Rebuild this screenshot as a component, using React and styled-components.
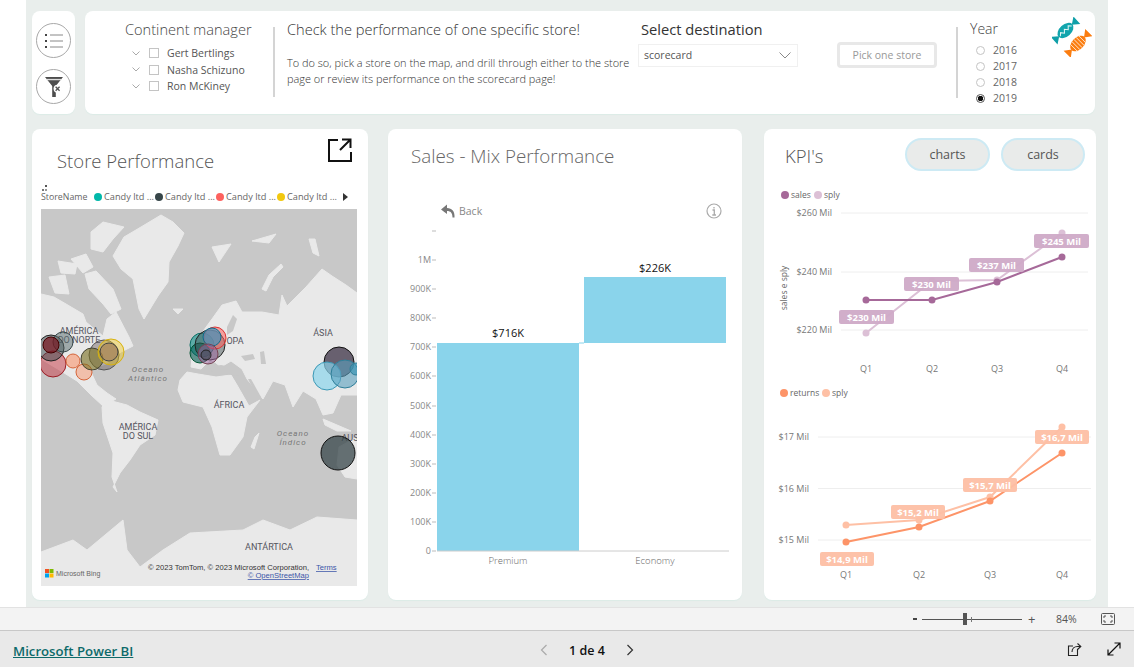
import React from 'react'
import styled, { createGlobalStyle } from 'styled-components'

const Global = createGlobalStyle`
  html, body {
    margin: 0;
    height: 100%;
    overflow: hidden;
    background: #fff;
    font-family: "Open Sans", "Noto Sans", sans-serif;
  }
`

const Page = styled.div`
  width: 1134px;
  height: 667px;
  display: flex;
  flex-direction: column;
`
const Canvas = styled.div`
  width: 1082px;
  height: 607px;
  margin-left: 26px;
  padding: 11px 0 0 6px;
  box-sizing: border-box;
  background: #e9eeec;
  display: flex;
  flex-direction: column;
  gap: 15px;
`
const TopRow = styled.div`
  display: flex;
  gap: 10px;
  height: 103px;
`
const BottomRow = styled.div`
  display: flex;
  height: 471px;
`
const Card = styled.div`
  background: #fff;
  border-radius: 8px;
  box-shadow: 0 1px 1px #dcebe7;
  box-sizing: border-box;
  overflow: hidden;
  width: ${p => p.$w}px;
  margin-right: ${p => p.$mr || 0}px;
`
const SideCard = styled(Card)`
  width: 43px;
  display: flex;
  flex-direction: column;
  align-items: center;
  padding-top: 12px;
  gap: 11px;
`
const RoundBtn = styled.div`
  width: 33px;
  height: 33px;
  border: 1px solid #a8a8a8;
  border-radius: 50%;
  display: flex;
  align-items: center;
  justify-content: center;
`
const MainCard = styled(Card)`
  width: 1010px;
  display: flex;
  position: relative;
`
const Slicer = styled.div`
  width: 148px;
  height: 70px;
  margin: 16px 0 0 40px;
  border-right: 2px solid #d4d4d4;
`
const SlicerTitle = styled.div`
  font-size: 14.6px;
  font-weight: 300;
  color: #444;
  line-height: 20px;
  margin-top: -8px;
`
const ManagerRows = styled.div`
  margin-top: 6px;
  padding-left: 7px;
`
const ManagerRow = styled.div`
  display: flex;
  align-items: center;
  height: 16.5px;
  font-size: 10.5px;
  color: #555;
`
const Check = styled.span`
  width: 10px;
  height: 10px;
  border: 1px solid #c4c4c4;
  margin: 0 8px 0 9px;
  box-sizing: border-box;
`
const Message = styled.div`
  width: 351px;
  margin-left: 12px;
`
const MessageTitle = styled.div`
  font-size: 14.6px;
  font-weight: 300;
  color: #333;
  line-height: 20px;
  margin-top: 8px;
  white-space: nowrap;
`
const MessageBody = styled.div`
  font-size: 10.95px;
  font-weight: 300;
  color: #333;
  line-height: 16px;
  margin-top: 16px;
  white-space: nowrap;
`
const Destination = styled.div`
  width: 318px;
`
const DestTitle = styled.div`
  font-size: 14.7px;
  color: #333;
  line-height: 20px;
  margin: 8px 0 0 3px;
`
const DestRow = styled.div`
  display: flex;
  align-items: center;
  margin-top: 3px;
`
const Select = styled.div`
  width: 160px;
  height: 23px;
  border: 1px solid #f0f0f0;
  box-sizing: border-box;
  display: flex;
  align-items: center;
  justify-content: space-between;
  padding: 0 6px 0 5px;
  font-size: 10.5px;
  color: #555;
`
const PickBtn = styled.div`
  width: 100px;
  height: 26px;
  margin-left: 39px;
  border: 3px solid #e8e8e8;
  border-radius: 4px;
  box-sizing: border-box;
  font-size: 10.5px;
  color: #999;
  display: flex;
  align-items: center;
  justify-content: center;
`
const YearSlicer = styled.div`
  border-left: 2px solid #d4d4d4;
  height: 71px;
  margin-top: 16px;
  padding-left: 12px;
`
const YearTitle = styled.div`
  font-size: 14px;
  font-weight: 300;
  color: #444;
  line-height: 20px;
  margin-top: -8px;
`
const YearRows = styled.div`
  margin-top: 3px;
  padding-left: 6px;
`
const YearRow = styled.div`
  display: flex;
  align-items: center;
  height: 16px;
  font-size: 10.5px;
  color: #666;
  gap: 8px;
`
const Radio = styled.span`
  width: 9px;
  height: 9px;
  border-radius: 50%;
  border: 1px solid ${p => (p.$on ? '#555' : '#c4c4c4')};
  box-sizing: border-box;
  background: ${p => (p.$on ? 'radial-gradient(circle, #111 0 2.5px, #fff 3px)' : '#fff')};
`
const CandySlot = styled.div`
  position: absolute;
  left: 967px;
  top: 6px;
`

const MapHeader = styled.div`
  display: flex;
  justify-content: space-between;
  height: 47px;
  padding: 9px 16px 0 25px;
  box-sizing: border-box;
`
const StoreTitle = styled.div`
  align-self: flex-end;
  font-size: 18.5px;
  font-weight: 300;
  color: #555;
  line-height: 30px;
`
const Legend = styled.div`
  display: flex;
  align-items: center;
  height: 33px;
  padding: 8px 0 0 9px;
  box-sizing: border-box;
  position: relative;
  font-size: 9.2px;
  color: #666;
  white-space: nowrap;
`
const LegendName = styled.span`
  width: 53px;
  font-size: 8.8px;
`
const LegendItem = styled.span`
  width: 61px;
  display: flex;
  align-items: center;
  gap: 2px;
`
const Dot = styled.i`
  width: 8px;
  height: 8px;
  border-radius: 50%;
  background: ${p => p.$c};
`
const MoreDots = styled.span`
  position: absolute;
  left: 13px;
  top: 9px;
  width: 2px;
  height: 2px;
  background: #555;
  box-shadow: -3px 4px 0 #777, 0 4px 0 #999;
`
const Arrow = styled.span`
  margin-left: 5px;
  width: 0;
  height: 0;
  border-left: 5px solid #333;
  border-top: 4px solid transparent;
  border-bottom: 4px solid transparent;
`
const MapWrap = styled.svg`
  display: block;
  margin-left: 9px;
`
const LandLayer = styled.g`
  filter: blur(0.5px);
`
const MapLabel = styled.text`
  font-family: Roboto, "Liberation Sans", sans-serif;
  font-size: 9px;
  fill: #555560;
  text-anchor: middle;
`
const SeaLabel = styled(MapLabel)`
  font-style: italic;
  font-size: 8px;
  letter-spacing: 1px;
  fill: #777;
`
const Attribution = styled.text`
  font-family: "Liberation Sans", sans-serif;
  font-size: ${p => p.$s || 7.6}px;
  fill: ${p => p.$c || '#333'};
  text-anchor: ${p => p.$a || 'end'};
  text-decoration: ${p => (p.$u ? 'underline' : 'none')};
`

const ChartTitle = styled.div`
  font-size: 18.8px;
  font-weight: 300;
  color: #666;
  line-height: 28px;
  padding: 13px 0 0 23px;
`
const DrillBar = styled.div`
  display: flex;
  align-items: center;
  justify-content: space-between;
  margin-top: 30px;
  height: 22px;
  padding: 0 20px 0 53px;
`
const Back = styled.div`
  display: flex;
  align-items: center;
  gap: 4px;
  font-size: 10.5px;
  color: #888;
`
const ChartSvg = styled.svg`
  display: block;
`
const AxisText = styled.text`
  font-family: "Open Sans", sans-serif;
  font-size: ${p => p.$s || 9.5}px;
  font-weight: ${p => p.$w || 400};
  fill: ${p => p.$c || '#666'};
  text-anchor: ${p => p.$a || 'middle'};
`
const KpiHeader = styled.div`
  display: flex;
  align-items: center;
  height: 33px;
  margin-top: 9px;
  padding-left: 21px;
`
const KpiTitle = styled.div`
  font-size: 18.5px;
  font-weight: 300;
  color: #555;
  width: 120px;
  margin-top: 2px;
`
const Pill = styled.div`
  width: ${p => p.$w}px;
  height: 33px;
  margin-left: ${p => p.$ml || 0}px;
  border: 2px solid #cdeaf4;
  border-radius: 17px;
  background: #e9ebea;
  box-sizing: border-box;
  font-size: 12.5px;
  color: #555;
  display: flex;
  align-items: center;
  justify-content: center;
`
const DataTag = styled.text`
  font-family: "Open Sans", sans-serif;
  font-size: 9.5px;
  font-weight: 700;
  fill: #fff;
  text-anchor: middle;
`
const HeaderGap = styled.div`
  height: 14px;
`
const ChartGap = styled.div`
  height: 6px;
`

const StatusBar = styled.div`
  height: 24px;
  background: #f3f3f3;
  border-top: 1px solid #e2e2e2;
  border-bottom: 1px solid #c8c8c8;
  box-sizing: border-box;
  display: flex;
  align-items: center;
  padding-left: 913px;
  font-size: 11px;
  color: #555;
`
const Minus = styled.span`
  width: 4px;
  height: 2px;
  background: #444;
`
const Track = styled.div`
  width: 100px;
  height: 1px;
  margin-left: 5px;
  background: #555;
  display: flex;
  align-items: center;
  padding-left: 41px;
  box-sizing: border-box;
`
const Thumb = styled.span`
  width: 4px;
  height: 12px;
  background: #555;
`
const Tick = styled.span`
  width: 1px;
  height: 5px;
  margin-left: 4px;
  background: #777;
`
const Plus = styled.span`
  margin-left: 6px;
  font-size: 13px;
  width: 18px;
`
const Percent = styled.span`
  margin-left: 10px;
  width: 45px;
  font-size: 10.5px;
`
const Footer = styled.div`
  height: 36px;
  background: #e9e9e9;
  display: flex;
  align-items: center;
  padding: 0 13px;
  font-size: 13px;
`
const ReportLink = styled.a`
  width: 527px;
  color: #0d6a6a;
  text-decoration: underline;
  font-weight: 600;
  font-size: 13.2px;
  margin-top: 4px;
`
const Pager = styled.div`
  display: flex;
  align-items: center;
  width: 94px;
  justify-content: space-between;
  color: #111;
  font-weight: 600;
  font-size: 12.5px;
  margin-top: 2px;
`
const FooterIcons = styled.div`
  margin-left: auto;
  display: flex;
  gap: 25px;
`

const managers = ['Gert Bertlings', 'Nasha Schizuno', 'Ron McKiney']
const years = ['2016', '2017', '2018', '2019']
const legendColors = ['#01b8aa', '#374649', '#fd625e', '#f2c80f']

const land = [
  // north america
  '0,85 13,88 25,95 42,105 45,113 62,127 66,110 75,103 88,128 92,137 80,143 65,155 56,158 50,163 56,176 66,184 75,190 62,197 50,186 36,172 20,162 0,150',
  // greenland
  '72,47 83,28 100,18 120,6 132,13 143,24 137,37 128,53 127,73 117,87 103,110 98,100 92,70 80,60',
  // south america
  '61,198 67,191 86,196 99,203 117,211 114,226 99,236 89,251 79,264 72,278 76,283 71,268 72,244 62,214',
  // africa
  '137,181 142,193 162,198 171,218 179,246 189,246 202,228 206,208 219,191 208,197 196,176 190,166 175,168 157,165 146,163 139,171',
  // eurasia
  '160,125 171,110 181,96 195,92 201,103 221,103 238,106 241,86 246,97 265,78 281,60 291,67 305,76 316,84 316,186 300,186 292,204 282,206 275,190 262,182 252,198 244,176 232,172 222,190 206,170 201,160 190,152 180,158 170,150 160,160 150,158 152,140',
  // antarctica
  '0,343 32,331 46,341 82,311 86,341 99,358 122,341 149,324 202,321 222,311 249,321 276,308 316,311 316,377 0,377',
  // australia
  '298,238 316,228 316,270 304,268 296,256',
  // canadian arctic
  '50,23 62,13 83,18 72,30 62,43 50,40',
  '30,50 45,45 52,58 42,64',
  '17,52 36,55 34,65 20,64',
  '8,68 24,66 28,85 14,84',
  '44,65 55,62 72,80 80,100 70,105 62,95 48,80',
  // svalbard, zemlya, iceland and friends
  '171,38 190,35 178,53',
  '221,80 228,66 240,55 242,58 232,68 225,82',
  '132,100 142,100 137,105',
  '268,30 274,30 278,47 272,44',
  '211,32 235,25 228,34',
  '214,228 218,224 213,240 210,238',
  '282,210 296,216 310,222 296,222 284,216',
]

// seas cut back out of the land
const seas = [
  '168,158 180,156 190,158 200,162 198,167 184,165 172,164',
  '186,118 192,106 196,110 192,122 186,126',
  '200,147 212,145 214,150 204,152',
  '219,143 223,142 225,155 220,155',
  '207,170 210,170 220,188 217,190',
]

const bubbles = [
  [12, 155, 13, 'rgba(200,70,80,.55)', '#9b1c24'],
  [10, 139, 13, 'rgba(55,70,73,.5)', '#222'],
  [22, 133, 10, 'rgba(85,105,108,.5)', '#374649'],
  [10, 136, 8, 'rgba(120,20,30,.7)', '#400'],
  [32, 152, 7, 'rgba(250,150,110,.6)', '#d5653a'],
  [43, 163, 8, 'rgba(250,150,110,.5)', '#d5653a'],
  [63, 146, 15, 'rgba(90,75,75,.4)', '#555'],
  [51, 150, 11, 'rgba(120,110,30,.6)', '#443'],
  [70, 143, 13, 'rgba(242,200,15,.4)', '#d8b20c'],
  [68, 143, 9, 'rgba(150,110,90,.5)', '#444'],
  [161, 136, 12, 'rgba(1,150,140,.55)', '#0a6d64'],
  [159, 144, 10, 'rgba(0,90,80,.6)', '#053'],
  [169, 136, 15, 'rgba(55,70,73,.45)', '#222'],
  [174, 129, 11, 'rgba(253,98,94,.55)', '#d33'],
  [171, 128, 9, 'rgba(70,150,190,.7)', '#0f6d8c'],
  [167, 145, 10, 'rgba(160,100,160,.5)', '#745'],
  [165, 146, 5, 'rgba(55,70,73,.4)', '#222'],
  [298, 153, 15, 'rgba(60,50,70,.75)', '#111'],
  [286, 167, 14, 'rgba(138,212,235,.7)', '#3b98b5'],
  [304, 165, 14, 'rgba(90,160,190,.6)', '#2f7f99'],
  [315, 160, 6, 'rgba(60,150,180,.7)', '#2f7f99'],
  [297, 244, 17, 'rgba(55,70,73,.75)', '#111'],
]

const WorldMap = () => (
  <MapWrap width="316" height="377" viewBox="0 0 316 377">
    <rect width="316" height="377" fill="#c8c8c8" />
    <LandLayer>
      {land.map((pts, i) => (
        <polygon key={i} points={pts} fill="#e9e9e9" stroke="#e9e9e9" strokeLinejoin="round" />
      ))}
      {seas.map((pts, i) => (
        <polygon key={i} points={pts} fill="#c8c8c8" />
      ))}
    </LandLayer>
    <MapLabel x="38" y="125">AMÉRICA</MapLabel>
    <MapLabel x="38" y="134">DO NORTE</MapLabel>
    <MapLabel x="194" y="135">OPA</MapLabel>
    <MapLabel x="282" y="127">ÁSIA</MapLabel>
    <MapLabel x="188" y="199">ÁFRICA</MapLabel>
    <MapLabel x="97" y="221">AMÉRICA</MapLabel>
    <MapLabel x="97" y="230">DO SUL</MapLabel>
    <MapLabel x="309" y="232">AUS</MapLabel>
    <MapLabel x="228" y="341">ANTÁRTICA</MapLabel>
    <SeaLabel x="107" y="163">Oceano</SeaLabel>
    <SeaLabel x="107" y="172">Atlântico</SeaLabel>
    <SeaLabel x="252" y="227">Oceano</SeaLabel>
    <SeaLabel x="252" y="236">Índico</SeaLabel>
    {bubbles.map(([cx, cy, r, fill, stroke], i) => (
      <circle key={i} cx={cx} cy={cy} r={r} fill={fill} stroke={stroke} strokeWidth="1" />
    ))}
    <rect x="4" y="360" width="4" height="4" fill="#f25022" />
    <rect x="8.5" y="360" width="4" height="4" fill="#7fba00" />
    <rect x="4" y="364.5" width="4" height="4" fill="#00a4ef" />
    <rect x="8.5" y="364.5" width="4" height="4" fill="#ffb900" />
    <Attribution x="15" y="367" $a="start" $c="#666" $s={7}>Microsoft Bing</Attribution>
    <Attribution x="268" y="361">© 2023 TomTom, © 2023 Microsoft Corporation,</Attribution>
    <Attribution x="275" y="361" $a="start" $c="#3a55a8" $u>Terms</Attribution>
    <Attribution x="268" y="369" $c="#3a55a8" $u>© OpenStreetMap</Attribution>
  </MapWrap>
)

const yTicks = [
  ['', 231], ['1M', 260], ['900K', 289], ['800K', 318], ['700K', 347], ['600K', 376],
  ['500K', 406], ['400K', 435], ['300K', 464], ['200K', 493], ['100K', 522], ['0', 551],
]

// svg origin sits at x 388, y 222 of the page
const SalesChart = () => (
  <ChartSvg width="354" height="344" viewBox="388 222 354 344">
    {yTicks.map(([t, y]) => (
      <g key={y}>
        <AxisText x="431" y={y + 3} $a="end" $s={9} $c="#888">{t}</AxisText>
        <line x1="432" x2="436" y1={y} y2={y} stroke="#bbb" />
      </g>
    ))}
    <rect x="437" y="343" width="142" height="208" fill="#8ad4eb" />
    <rect x="584" y="277" width="142" height="66" fill="#8ad4eb" />
    <line x1="579" x2="584" y1="343" y2="343" stroke="#8ad4eb" />
    <line x1="437" x2="729" y1="551" y2="551" stroke="#ccc" />
    <AxisText x="508" y="337" $s={11} $c="#111">$716K</AxisText>
    <AxisText x="655" y="272" $s={11} $c="#111">$226K</AxisText>
    <AxisText x="508" y="564" $c="#666" $w={300}>Premium</AxisText>
    <AxisText x="655" y="564" $c="#666" $w={300}>Economy</AxisText>
  </ChartSvg>
)

const salesChart = {
  box: '764 185 332 193',
  height: 193,
  legend: [[785, 195, '#a66999', 'sales', 791], [818, 195, '#dcc0d6', 'sply', 824]],
  grid: [['$260 Mil', 213], ['$240 Mil', 272], ['$220 Mil', 330]],
  gridX: [841, 1088],
  labelX: 832,
  quarters: [866, 932, 997, 1062],
  quarterY: 372,
  main: [[866, 300], [932, 300], [997, 282], [1062, 257]],
  prior: [[866, 333], [932, 281], [997, 280], [1062, 233]],
  mainColor: '#a66999',
  priorColor: '#dcc0d6',
  tagColor: '#cfaac7',
  tags: [[839, 310, '$230 Mil'], [904, 277, '$230 Mil '], [969, 258, '$237 Mil'], [1034, 234, '$245 Mil']],
  tagW: 55,
  axisTitle: true,
}

const returnsChart = {
  box: '764 384 332 206',
  height: 206,
  legend: [[784, 393, '#fd9468', 'returns', 790], [826, 393, '#fec0a5', 'sply', 832]],
  grid: [['$17 Mil', 437], ['$16 Mil', 488.5], ['$15 Mil', 540]],
  gridX: [818, 1091],
  labelX: 809,
  quarters: [846, 919, 990, 1062],
  quarterY: 578,
  main: [[846, 542], [919, 527], [990, 501], [1062, 453]],
  prior: [[846, 525], [919, 520], [990, 497], [1062, 427]],
  mainColor: '#fd9468',
  priorColor: '#fec0a5',
  tagColor: '#fdbfa4',
  tags: [[820, 552, '$14,9 Mil'], [891, 505, '$15,2 Mil'], [963, 478, '$15,7 Mil'], [1035, 430, '$16,7 Mil']],
  tagW: 54,
}

const pointsOf = list => list.map(p => p.join(',')).join(' ')

const KpiChart = ({ c }) => (
  <ChartSvg width="332" height={c.height} viewBox={c.box}>
    {c.legend.map(([x, y, color, name, tx]) => (
      <g key={name}>
        <circle cx={x} cy={y} r="4" fill={color} />
        <AxisText x={tx} y={y + 3} $a="start" $s={8.5}>{name}</AxisText>
      </g>
    ))}
    {c.grid.map(([t, y]) => (
      <g key={t}>
        <line x1={c.gridX[0]} x2={c.gridX[1]} y1={y} y2={y} stroke="#eeeeee" />
        <AxisText x={c.labelX} y={y + 3} $a="end" $s={9} $c="#777">{t}</AxisText>
      </g>
    ))}
    {c.axisTitle && (
      <AxisText x="0" y="0" $s={8.5} transform="translate(787 288) rotate(-90)">sales e sply</AxisText>
    )}
    {c.quarters.map((x, i) => (
      <AxisText key={x} x={x} y={c.quarterY} $s={9} $c="#777">Q{i + 1}</AxisText>
    ))}
    <polyline points={pointsOf(c.prior)} fill="none" stroke={c.priorColor} strokeWidth="2" />
    {c.prior.map(([x, y]) => <circle key={x} cx={x} cy={y} r="3.5" fill={c.priorColor} />)}
    <polyline points={pointsOf(c.main)} fill="none" stroke={c.mainColor} strokeWidth="2" />
    {c.main.map(([x, y]) => <circle key={x} cx={x} cy={y} r="3.5" fill={c.mainColor} />)}
    {c.tags.map(([x, y, t]) => (
      <g key={t}>
        <rect x={x} y={y} width={c.tagW} height="14" rx="2" fill={c.tagColor} fillOpacity=".95" />
        <DataTag x={x + c.tagW / 2} y={y + 10.5}>{t}</DataTag>
      </g>
    ))}
  </ChartSvg>
)

const Chevron = () => (
  <svg width="8" height="5" viewBox="0 0 8 5">
    <path d="M0.5 0.5 L4 4 L7.5 0.5" fill="none" stroke="#aaa" strokeWidth="1" />
  </svg>
)

const ListIcon = () => (
  <svg width="18" height="16" viewBox="0 0 18 16">
    <g fill="#444">
      <rect x="0" y="1" width="2" height="2" />
      <rect x="0" y="7" width="2" height="2" />
      <rect x="0" y="13" width="2" height="2" />
    </g>
    <g stroke="#888" strokeWidth="1">
      <line x1="5" x2="18" y1="2" y2="2" />
      <line x1="5" x2="18" y1="8" y2="8" />
      <line x1="5" x2="18" y1="14" y2="14" />
    </g>
  </svg>
)

const FunnelIcon = () => (
  <svg width="18" height="22" viewBox="0 0 20 24">
    <path d="M0 1 H20 L12 11 V23 H8 V11 Z" fill="#4d4d4d" />
    <rect x="2" y="3" width="16" height="1.5" fill="#ddd" />
    <circle cx="14" cy="14" r="4.5" fill="#fff" />
    <path d="M11.8 11.8 L16.2 16.2 M16.2 11.8 L11.8 16.2" stroke="#555" strokeWidth="1.5" />
  </svg>
)

const CandyIcon = () => (
  <svg width="40" height="40" viewBox="0 0 40 40">
    <g transform="translate(13.5 13.5) rotate(-42) scale(.85)">
      <path d="M-18 -6 L-10 0 L-18 6 Z M18 -6 L10 0 L18 6 Z" fill="#0f9fa8" />
      <ellipse rx="11" ry="7" fill="#12a5ad" />
      <path d="M-9 1 L-6 -2 L-3 1.5 L0 -2 L3 1.5 L6 -2 L9 1" fill="none" stroke="#e4f6f4" strokeWidth="1.2" />
    </g>
    <g transform="translate(26 26.5) rotate(-45) scale(.85)">
      <path d="M-18 -6 L-10 0 L-18 6 Z M18 -6 L10 0 L18 6 Z" fill="#fb7d10" />
      <ellipse rx="11" ry="7" fill="#fb7d10" />
      <path d="M-7 -6 V6 M-3.5 -7 V7 M0 -7 V7 M3.5 -7 V7 M7 -6 V6" stroke="#ffe8cf" strokeWidth="1.1" />
    </g>
  </svg>
)

const PopOutIcon = () => (
  <svg width="24" height="24" viewBox="0 0 24 24" fill="none" stroke="#111" strokeWidth="2">
    <path d="M10 2 H1 V23 H23 V14" />
    <path d="M12 12 L22 2 M14 1.5 H22.5 V10" />
  </svg>
)

const BackIcon = () => (
  <svg width="14" height="14" viewBox="0 0 14 14">
    <path d="M6 0.5 L0 5.5 L6 10 V7 C9.5 7 11.5 9 11.5 13.5 H13.5 C14 7.5 11 4 6 4 Z" fill="#777" />
  </svg>
)

const InfoIcon = () => (
  <svg width="16" height="16" viewBox="0 0 16 16" fill="none" stroke="#aaa">
    <circle cx="8" cy="8" r="7" strokeWidth="1.2" />
    <path d="M6.5 7 H8.3 V12 M6.3 12 H10 M8 4 V5.5" strokeWidth="1.3" />
  </svg>
)

const FitIcon = () => (
  <svg width="14" height="12" viewBox="0 0 14 12" fill="none" stroke="#555">
    <rect x="0.5" y="0.5" width="13" height="11" rx="1" />
    <path d="M3 5 V3 H5 M9 3 H11 V5 M11 7 V9 H9 M5 9 H3 V7" />
  </svg>
)

const ShareIcon = () => (
  <svg width="15" height="15" viewBox="0 0 15 15" fill="none" stroke="#222" strokeWidth="1.1">
    <path d="M10.5 7 V13.5 H1.5 V4 H6" />
    <path d="M5 10 C5 6.5 7.5 4.5 10.5 4.5 H13 M10.5 1.5 L13.8 4.5 L10.5 7.5" />
  </svg>
)

const ExpandIcon = () => (
  <svg width="14" height="14" viewBox="0 0 14 14" fill="none" stroke="#111" strokeWidth="1.2">
    <path d="M1 13 L13 1 M7.5 1 H13 V6.5 M1 7.5 V13 H6.5" />
  </svg>
)

const PagerArrow = ({ left, color }) => (
  <svg width="8" height="12" viewBox="0 0 8 12" fill="none" stroke={color} strokeWidth="1.2">
    <path d={left ? 'M6.5 1 L1.5 6 L6.5 11' : 'M1.5 1 L6.5 6 L1.5 11'} />
  </svg>
)

export default function App() {
  return (
    <Page>
      <Global />
      <Canvas>
        <TopRow>
          <SideCard>
            <RoundBtn><ListIcon /></RoundBtn>
            <RoundBtn><FunnelIcon /></RoundBtn>
          </SideCard>
          <MainCard>
            <Slicer>
              <SlicerTitle>Continent manager</SlicerTitle>
              <ManagerRows>
                {managers.map(m => (
                  <ManagerRow key={m}>
                    <Chevron />
                    <Check />
                    {m}
                  </ManagerRow>
                ))}
              </ManagerRows>
            </Slicer>
            <Message>
              <MessageTitle>Check the performance of one specific store!</MessageTitle>
              <MessageBody>
                To do so, pick a store on the map, and drill through either to the store<br />
                page or review its performance on the scorecard page!
              </MessageBody>
            </Message>
            <Destination>
              <DestTitle>Select destination</DestTitle>
              <DestRow>
                <Select>
                  scorecard
                  <svg width="12" height="7" viewBox="0 0 12 7">
                    <path d="M0.5 0.5 L6 6 L11.5 0.5" fill="none" stroke="#888" />
                  </svg>
                </Select>
                <PickBtn>Pick one store</PickBtn>
              </DestRow>
            </Destination>
            <YearSlicer>
              <YearTitle>Year</YearTitle>
              <YearRows>
                {years.map(y => (
                  <YearRow key={y}>
                    <Radio $on={y === '2019'} />
                    {y}
                  </YearRow>
                ))}
              </YearRows>
            </YearSlicer>
            <CandySlot><CandyIcon /></CandySlot>
          </MainCard>
        </TopRow>
        <BottomRow>
          <Card $w={336} $mr={20}>
            <MapHeader>
              <StoreTitle>Store Performance</StoreTitle>
              <PopOutIcon />
            </MapHeader>
            <Legend>
              <MoreDots />
              <LegendName>StoreName</LegendName>
              {legendColors.map(c => (
                <LegendItem key={c}>
                  <Dot $c={c} />
                  Candy ltd ...
                </LegendItem>
              ))}
              <Arrow />
            </Legend>
            <WorldMap />
          </Card>
          <Card $w={354} $mr={22}>
            <ChartTitle>Sales - Mix Performance</ChartTitle>
            <DrillBar>
              <Back><BackIcon />Back</Back>
              <InfoIcon />
            </DrillBar>
            <SalesChart />
          </Card>
          <Card $w={332}>
            <KpiHeader>
              <KpiTitle>KPI's</KpiTitle>
              <Pill $w={85}>charts</Pill>
              <Pill $w={84} $ml={11}>cards</Pill>
            </KpiHeader>
            <HeaderGap />
            <KpiChart c={salesChart} />
            <ChartGap />
            <KpiChart c={returnsChart} />
          </Card>
        </BottomRow>
      </Canvas>
      <StatusBar>
        <Minus />
        <Track>
          <Thumb />
          <Tick />
        </Track>
        <Plus>+</Plus>
        <Percent>84%</Percent>
        <FitIcon />
      </StatusBar>
      <Footer>
        <ReportLink>Microsoft Power BI</ReportLink>
        <Pager>
          <PagerArrow left color="#aaa" />
          1 de 4
          <PagerArrow color="#333" />
        </Pager>
        <FooterIcons>
          <ShareIcon />
          <ExpandIcon />
        </FooterIcons>
      </Footer>
    </Page>
  )
}
